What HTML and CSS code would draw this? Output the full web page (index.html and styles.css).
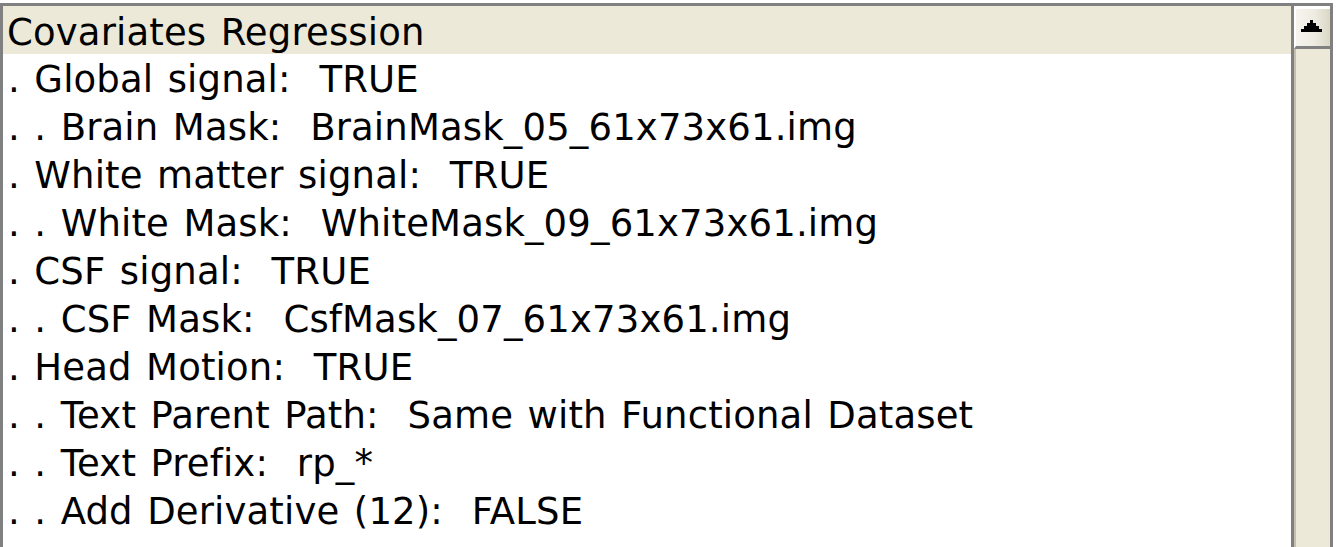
FILE: index.html
```html
<!DOCTYPE html>
<html>
<head>
<meta charset="utf-8">
<link rel="stylesheet" href="styles.css">
</head>
<body>
<div class="panel">
  <div class="view">
    <div class="header">Covariates Regression</div>
    <div class="rows">
      <div class="row">. Global signal:  TRUE</div>
      <div class="row">. . Brain Mask:  BrainMask_05_61x73x61.img</div>
      <div class="row">. White matter signal:  TRUE</div>
      <div class="row">. . White Mask:  WhiteMask_09_61x73x61.img</div>
      <div class="row">. CSF signal:  TRUE</div>
      <div class="row">. . CSF Mask:  CsfMask_07_61x73x61.img</div>
      <div class="row">. Head Motion:  TRUE</div>
      <div class="row">. . Text Parent Path:  Same with Functional Dataset</div>
      <div class="row">. . Text Prefix:  rp_*</div>
      <div class="row">. . Add Derivative (12):  FALSE</div>
    </div>
  </div>
  <div class="scrollbar">
    <div class="up-btn">
      <svg class="arrow" width="21" height="12" viewBox="0 0 21 12"><polygon points="9,0 12,0 12,3 15,3 15,6 18,6 18,9 21,9 21,12 0,12 0,9 3,9 3,6 6,6 6,3 9,3" fill="#000"/></svg>
    </div>
    <div class="track"></div>
  </div>
</div>
</body>
</html>
```
FILE: styles.css
```css
html, body {
  margin: 0;
  padding: 0;
  background: #ffffff;
  overflow: hidden;
}
body {
  width: 1337px;
  height: 547px;
}
.panel {
  margin-top: 3px;
  width: 1327px;
  height: 544px;
  border-top: 3px solid #808080;
  border-left: 3px solid #808080;
  border-right: 3px solid #808080;
  display: flex;
  background: #ffffff;
}
.view {
  flex: 1;
  display: flex;
  flex-direction: column;
  font-family: "DejaVu Sans", sans-serif;
  font-size: 37px;
  word-spacing: 2.5px;
  letter-spacing: 0.15px;
  color: #000;
  overflow: hidden;
}
.header {
  height: 43px;
  line-height: 43px;
  padding-top: 5px;
  padding-left: 4px;
  background: #ECE9D8;
  white-space: pre;
}
.rows {
  padding-top: 2px;
  padding-left: 5px;
}
.row {
  height: 48px;
  line-height: 48px;
  white-space: pre;
}
.scrollbar {
  width: 36px;
  border-left: 3px solid #808080;
  display: flex;
  flex-direction: column;
}
.up-btn {
  height: 37px;
  border-top: 3px solid #ffffff;
  border-left: 2px solid #ffffff;
  border-bottom: 3px solid #808080;
  background: linear-gradient(to right, #F5F4EE 0%, #EEECE2 55%, #DAD7C5 100%);
  display: flex;
  justify-content: center;
  align-items: center;
}
.arrow {
  margin-right: 3px;
  margin-bottom: 4px;
}
.track {
  flex: 1;
  background: #ECE9D8;
  border-left: 2px solid #C3C0B0;
}
```
